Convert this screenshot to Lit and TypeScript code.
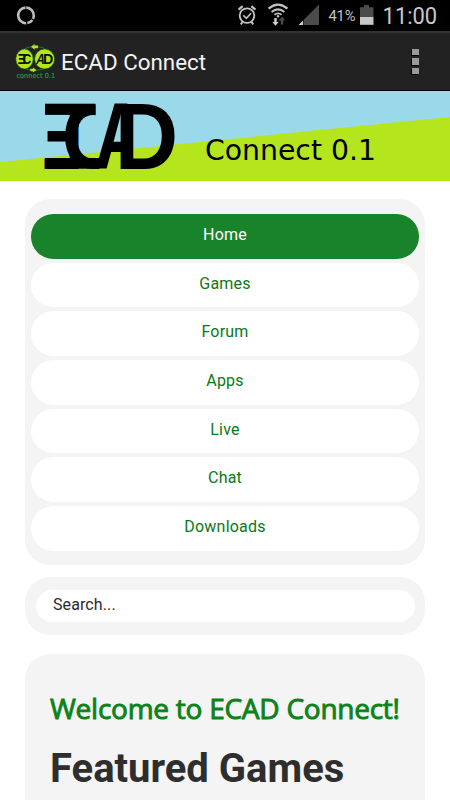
import { LitElement, html, css } from "lit";
import { customElement, property } from "lit/decorators.js";

@customElement("status-bar")
class StatusBar extends LitElement {
  static styles = css`
    :host { display: flex; height: 31px; background: #000; color: #c3c3c3; font-family: Roboto, sans-serif; }
    svg { display: block; width: 450px; height: 31px; }
  `;
  render() {
    return html`<svg viewBox="0 0 450 31">
      <circle cx="26" cy="15.4" r="7.8" fill="none" stroke="#bdbdbd" stroke-width="2.6" stroke-dasharray="15.5 1.2 6 1.2 24 1.1" transform="rotate(-88 26 15.4)"/>
      <g fill="none" stroke="#c3c3c3">
        <circle cx="247" cy="15.6" r="7.3" stroke-width="1.8"/>
        <path d="M243.3 15.3l3 3 4.8-5" stroke-width="1.6"/>
        <path d="M238.6 9.6l4-3.5M255.4 9.6l-4-3.5" stroke-width="2.2"/>
        <path d="M242.5 22l-1.7 2.4M251.5 22l1.7 2.4" stroke-width="2"/>
        <path d="M268.6 8.6q9.4-8 18.8 0" stroke-width="2.2"/>
        <path d="M271.6 12q6.4-5.2 12.8 0" stroke-width="2"/>
        <path d="M274.4 14.8q3.6-2.8 7.2 0" stroke-width="1.8"/>
      </g>
      <circle cx="278" cy="16.3" r="1.2" fill="#c3c3c3"/>
      <path d="M274.3 18h2.4v4h2l-3.2 3.7-3.2-3.7h2z" fill="#d0d0d0"/>
      <path d="M280.8 24.5h2.4v-4h2l-3.2-4-3.2 4h2z" fill="#4b4b4b"/>
      <path d="M319 4.5V25h-15.5v-5z" fill="#4b4b4b"/>
      <path d="M303 20.5V25h-4.5z" fill="#d0d0d0"/>
      <text x="328.4" y="21.2" font-size="14.5" textLength="27.2" lengthAdjust="spacingAndGlyphs" fill="#c3c3c3">41%</text>
      <path d="M360 7.2h4V5h5v2.2h4.5V17H360z" fill="#4b4b4b"/>
      <path d="M360 17h13.5v7.8H360z" fill="#c8c8c8"/>
      <text x="382.6" y="24" font-size="23.8" textLength="54.5" lengthAdjust="spacingAndGlyphs" fill="#c8c8c8">11:00</text>
    </svg>`;
  }
}

@customElement("app-bar")
class AppBar extends LitElement {
  static styles = css`
    :host {
      display: flex; align-items: center; box-sizing: border-box; height: 60px; padding: 0 31.5px 0 14px;
      background: #222; border-top: 2px solid #333; border-bottom: 1px solid #000;
      color: #f3f3f3; font: 22.4px/28px Roboto, sans-serif;
    }
    .logo { width: 44px; height: 40px; flex: none; }
    .title { flex: 1; margin: 1px 0 0 3px; white-space: nowrap; }
    .more { display: flex; flex-direction: column; gap: 3px; }
    .dot { width: 6.5px; height: 6.5px; background: #999; box-shadow: -1px 1px 0 #000; }
  `;
  render() {
    return html`
      <svg class="logo" viewBox="14 41 44 40">
        <ellipse cx="35" cy="57.5" rx="18" ry="12" fill="none" stroke="#157a32" stroke-width="1"/>
        <ellipse cx="24.5" cy="58" rx="8.7" ry="10" fill="#b5e61d" stroke="#135522" stroke-width=".6"/>
        <ellipse cx="44.6" cy="58" rx="10" ry="10" fill="#b5e61d" stroke="#135522" stroke-width=".6"/>
        <path d="M31 45.8l3.6-2.9v1.5h3.4v2.9h-3.4v1.5z" fill="#b5e61d"/>
        <path d="M36.5 69l-3.6-2.6v1.3h-2.6v2.6h2.6v1.3z" fill="#b5e61d"/>
        <g fill="#0b1300" font-family="Liberation Sans, sans-serif" font-weight="700" font-size="14.5">
          <text transform="translate(26 63) scale(-.85 1)">E</text>
          <text transform="translate(22.4 63) scale(.84 1)">C</text>
          <text transform="translate(35.5 63) skewX(-12) scale(.82 1)">A</text>
          <text transform="translate(43 63) scale(.98 1)">D</text>
        </g>
        <text x="16.5" y="76.8" font-family="DejaVu Sans, sans-serif" font-size="6.9" textLength="38.6" lengthAdjust="spacingAndGlyphs" fill="#22a045" stroke="#22a045" stroke-width=".15">connect 0.1</text>
      </svg>
      <div class="title">ECAD Connect</div>
      <div class="more"><div class="dot"></div><div class="dot"></div><div class="dot"></div></div>
    `;
  }
}

@customElement("site-banner")
class SiteBanner extends LitElement {
  static styles = css`
    :host { display: block; height: 90px; }
    svg { display: block; width: 450px; height: 90px; }
  `;
  render() {
    return html`<svg viewBox="0 0 450 90">
      <defs>
        <clipPath id="c"><path d="M40 0H95.5V45H100V90H40z"/></clipPath>
        <clipPath id="a"><rect x="90" y="0" width="43" height="90"/></clipPath>
      </defs>
      <rect width="450" height="90" fill="#9ad9ea"/>
      <path d="M0 71L450 26V90H0z" fill="#b5e61d"/>
      <rect x="45" y="12.7" width="50.5" height="11" />
      <rect x="45" y="67" width="54" height="10.7" />
      <g font-family="Liberation Sans, sans-serif" font-weight="700" font-size="94.5">
        <text transform="translate(82.5 77.7) scale(-.64 1)">E</text>
        <g clip-path="url(#c)"><text transform="translate(61.7 76.8) scale(.88 .97)">C</text></g>
        <g clip-path="url(#a)"><text transform="translate(94 77.7) scale(.79 1)">A</text></g>
        <text transform="translate(114.8 77.7) scale(.93 1)">D</text>
      </g>
      <text x="205" y="68.8" font-family="DejaVu Sans, sans-serif" font-size="28.4" textLength="171" lengthAdjust="spacingAndGlyphs">Connect 0.1</text>
    </svg>`;
  }
}

@customElement("nav-menu")
class NavMenu extends LitElement {
  static styles = css`
    :host {
      display: flex; flex-direction: column; gap: 4px; box-sizing: border-box; height: 366px;
      padding: 15px 6px 13px; background: #f4f4f4; border-radius: 25px;
    }
    .item {
      height: 44.7px; flex: none; box-sizing: border-box; padding-top: 10px; border-radius: 22.4px; background: #fff;
      color: #087a16; text-align: center; font: 16px/21px Roboto, sans-serif; letter-spacing: .2px;
    }
    .active { background: #18832a; color: #fff; }
  `;
  @property({ attribute: false }) items: string[] = [];
  render() {
    return this.items.map((t, i) => html`<div class="item ${i === 0 ? "active" : ""}">${t}</div>`);
  }
}

@customElement("app-root")
class AppRoot extends LitElement {
  static styles = css`
    :host { display: block; height: 800px; overflow: hidden; background: #fff; }
    .page { padding: 18px 25px 0; display: flex; flex-direction: column; }
    .search { margin-top: 12.4px; padding: 12.5px 10.5px; background: #f4f4f4; border-radius: 25px; }
    .field {
      height: 32.5px; box-sizing: border-box; padding: 4px 17.5px; border-radius: 16.2px; background: #fff;
      color: #2b2b2b; font: 16px/21px Roboto, sans-serif; letter-spacing: .1px;
    }
    .content { margin-top: 19px; height: 200px; padding: 36px 25px 0; background: #f4f4f4; border-radius: 25px; white-space: nowrap; }
    .welcome { margin: 0; color: #0c8218; font: 400 28px/37px "Open Sans", sans-serif; letter-spacing: -.25px; -webkit-text-stroke: .9px #0c8218; }
    .featured { margin: 18px 0 0; color: #2e2e2e; font: 700 40px/48px Roboto, sans-serif; }
  `;
  render() {
    return html`
      <status-bar></status-bar>
      <app-bar></app-bar>
      <site-banner></site-banner>
      <div class="page">
        <nav-menu .items=${["Home", "Games", "Forum", "Apps", "Live", "Chat", "Downloads"]}></nav-menu>
        <div class="search"><div class="field">Search...</div></div>
        <div class="content">
          <h2 class="welcome">Welcome to ECAD Connect!</h2>
          <h1 class="featured">Featured Games</h1>
        </div>
      </div>
    `;
  }
}
